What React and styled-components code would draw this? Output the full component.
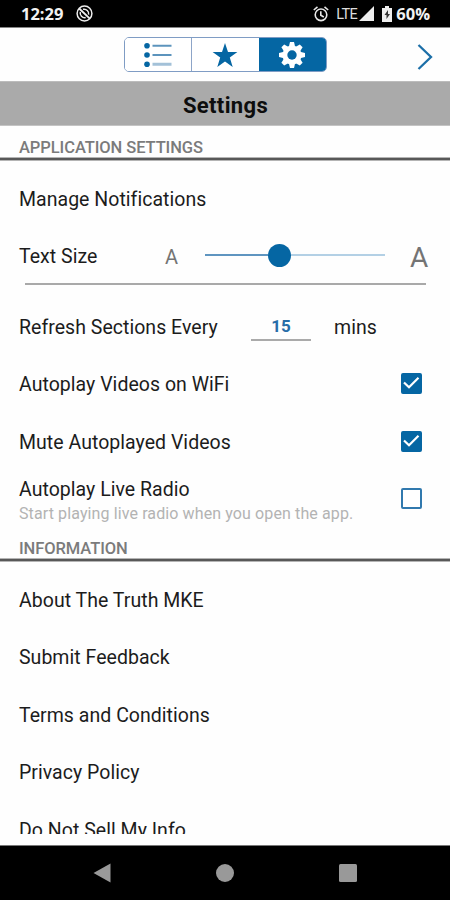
import React from "react";
import styled, { createGlobalStyle } from "styled-components";

const BLUE = "#0566a3";

const GlobalStyle = createGlobalStyle`
  * { box-sizing: border-box; }
  body { margin: 0; background: #fff; }
`;

const Screen = styled.div`
  width: 450px;
  height: 900px;
  display: flex;
  flex-direction: column;
  overflow: hidden;
  background: #fefefe;
  font-family: Roboto, sans-serif;
  color: #1c1c1c;
`;

const StatusBar = styled.header`
  height: 28px;
  flex: none;
  display: flex;
  align-items: center;
  justify-content: space-between;
  padding: 0 20px 0 21px;
  background: #000;
  border-bottom: 1px solid #858585;
  color: #f2f2f2;
`;

const StatusGroup = styled.div`
  display: flex;
  align-items: center;
  svg { display: block; }
`;

const StatusText = styled.span`
  font: 700 16.5px/20px "Open Sans", sans-serif;
  margin-right: ${(p) => p.$gap || "0"};
`;

const Network = styled.span`
  font-size: 14.5px;
  line-height: 20px;
  letter-spacing: -0.6px;
  margin: 2px 2px 0 7px;
  color: #ddd;
`;

const Battery = styled.span`
  display: flex;
  margin: 0 4px 0 8px;
`;

const Toolbar = styled.nav`
  height: 53px;
  flex: none;
  display: grid;
  grid-template-columns: 124px 203px 1fr;
  align-items: start;
  padding-top: 9px;
`;

const Segments = styled.div`
  grid-column: 2;
  height: 35px;
  display: grid;
  grid-template-columns: 67px 67px 1fr;
  border: 1px solid #7f9cc4;
  border-radius: 5px;
  overflow: hidden;
`;

const Segment = styled.button`
  display: flex;
  align-items: center;
  justify-content: center;
  padding: 0 ${(p) => (p.$divided ? "0" : "1px")} 0 0;
  border: 0;
  border-right: ${(p) => (p.$divided ? "1px solid #8da5c8" : "0")};
  background: ${(p) => (p.$active ? BLUE : "#fff")};
`;

const NextButton = styled.button`
  justify-self: end;
  display: flex;
  padding: 0;
  margin: 6px 17px 0 0;
  border: 0;
  background: none;
`;

const Title = styled.h1`
  height: 45px;
  flex: none;
  margin: 0;
  padding-left: 1px;
  background: #aaa;
  border-top: 1px solid #bcbcbc;
  border-bottom: 1px solid #c4c4c4;
  text-align: center;
  font-size: 22px;
  font-weight: 700;
  line-height: 48px;
  letter-spacing: 0.35px;
  color: #0d0d0d;
`;

const Content = styled.main`
  height: 708px;
  flex: none;
  overflow: hidden;
`;

const SectionLabel = styled.h2`
  height: 35px;
  margin: ${(p) => p.$margin};
  padding: 6px 0 0 19px;
  background: linear-gradient(#b4b4b4 1px, #585858 1px 3px, #b4b4b4 3px) bottom / 100% 4px no-repeat;
  font-size: 16.5px;
  font-weight: 500;
  line-height: 32px;
  letter-spacing: -0.08px;
  color: #7b7b7b;
`;

const Row = styled.div`
  height: 57.5px;
  display: flex;
  align-items: center;
  padding: 0 28px 0 19px;
`;

const Label = styled.span`
  flex: ${(p) => (p.$width ? "none" : "1")};
  width: ${(p) => p.$width || "auto"};
  font-size: 19.5px;
  line-height: 24px;
  letter-spacing: 0.03px;
  white-space: nowrap;
`;

const Stack = styled.div`
  flex: 1;
  display: flex;
  flex-direction: column;
  padding-top: 3px;
`;

const Hint = styled.span`
  font-size: 16px;
  line-height: 24px;
  letter-spacing: 0.11px;
  color: #b3b3b3;
  white-space: nowrap;
`;

const SizeMark = styled.span`
  flex: none;
  font-size: ${(p) => p.$size};
  color: #747474;
`;

const Slider = styled.div`
  flex: none;
  width: 180px;
  height: 24px;
  margin: -4px 25px 0 27px;
  display: grid;
  grid-template-columns: 62.5px 23px 1fr;
  align-items: center;
`;

const Track = styled.span`
  height: 2px;
  background: ${(p) => (p.$filled ? "#5f95c0" : "#b3d0e5")};
`;

const Thumb = styled.span`
  width: 23px;
  height: 23px;
  border-radius: 50%;
  background: ${BLUE};
`;

const Rule = styled.div`
  height: 2px;
  margin: -3px 24px 14px 25px;
  background: #a9a9a9;
`;

const Minutes = styled.span`
  width: 60px;
  height: 27px;
  margin-right: 23px;
  border-bottom: 2px solid #aaa;
  text-align: center;
  font-size: 17px;
  font-weight: 700;
  line-height: 25px;
  color: #286da8;
`;

const Checkbox = styled.span`
  width: 21px;
  height: 21px;
  margin-bottom: 3px;
  display: flex;
  align-items: center;
  justify-content: center;
  border: 2px solid ${(p) => (p.$checked ? BLUE : "#3179ae")};
  border-radius: 2px;
  background: ${(p) => (p.$checked ? BLUE : "#fff")};
  svg { flex: none; }
`;

const NavBar = styled.footer`
  height: 55px;
  flex: none;
  margin-top: auto;
  border-top: 1px solid #777;
  background: #000;
  display: flex;
  justify-content: center;
  align-items: center;
  gap: 105px;
`;

const Check = ({ on }) => (
  <Checkbox $checked={on}>
    {on && (
      <svg width="21" height="21" viewBox="0 0 21 21">
        <path d="M3 9.5 8 14.3 17.5 4.8" fill="none" stroke="#fff" strokeWidth="2.2" />
      </svg>
    )}
  </Checkbox>
);

const ListIcon = () => (
  <svg width="30" height="26" viewBox="0 0 30 26">
    {[3.8, 13, 22.2].map((y, i) => (
      <g key={y}>
        <circle cx="4" cy={y} r="2.8" fill={BLUE} />
        <path d={`M9.5 ${y}H28.5`} stroke={i === 2 ? "#a3c1d8" : "#5c94bd"} strokeWidth={i === 2 ? 3 : 2} />
      </g>
    ))}
  </svg>
);

const StarIcon = () => (
  <svg width="28" height="26" viewBox="0 0 28 26">
    <path d="M14 .9 17 10.1H26.4l-7.6 5.5 2.9 9.4L14 19.4l-7.7 5.6 2.9-9.4-7.6-5.5H11z" fill={BLUE} />
  </svg>
);

const GearIcon = () => (
  <svg width="28" height="28" viewBox="-14 -14 28 28">
    {[0, 45, 90, 135].map((a) => (
      <path key={a} d="M-3.2-8-2-13h4L3.2-8V8L2 13h-4L-3.2 8z" fill="#fff" transform={`rotate(${a})`} />
    ))}
    <circle r="9.5" fill="#fff" />
    <circle r="4.7" fill={BLUE} />
  </svg>
);

export default function App() {
  return (
    <Screen>
      <GlobalStyle />
      <StatusBar>
        <StatusGroup>
          <StatusText $gap="13px">12:29</StatusText>
          <svg width="17" height="17" viewBox="0 0 17 17" fill="none" stroke="#eee">
            <circle cx="8.5" cy="8.5" r="7.4" strokeWidth="1.5" />
            <path d="M3.2 3.5 13.8 13.6" strokeWidth="1.9" />
            <path d="M7 4.3a4.6 4.6 0 0 1 5.6 5.4M4.3 7a4.6 4.6 0 0 0 5.4 5.6" strokeWidth="1.5" />
          </svg>
        </StatusGroup>
        <StatusGroup>
          <svg width="16" height="16" viewBox="0 0 16 16" fill="none" stroke="#e8e8e8" strokeWidth="1.6">
            <circle cx="8" cy="8.8" r="5.8" />
            <path d="M.8 4 4.5.9M15.2 4 11.5.9M7.8 5.2v4l3 1.8" />
          </svg>
          <Network>LTE</Network>
          <svg width="15" height="15" viewBox="0 0 15 15"><path d="M15 0v15H0z" fill="#eee" /></svg>
          <Battery>
            <svg width="10" height="16" viewBox="0 0 10 16">
              <path d="M3 0h4v2h3v14H0V2h3z" fill="#eee" />
              <path d="M6 4 2.5 9h2v4L8 8H6z" fill="#333" />
            </svg>
          </Battery>
          <StatusText>60%</StatusText>
        </StatusGroup>
      </StatusBar>

      <Toolbar>
        <Segments>
          <Segment $divided aria-label="Sections"><ListIcon /></Segment>
          <Segment aria-label="Favorites"><StarIcon /></Segment>
          <Segment $active aria-label="Settings"><GearIcon /></Segment>
        </Segments>
        <NextButton aria-label="Next">
          <svg width="16" height="28" viewBox="0 0 16 28">
            <path d="M1.5 2 14 14 1.5 26" fill="none" stroke="#1c6fa8" strokeWidth="2.3" />
          </svg>
        </NextButton>
      </Toolbar>

      <Title>Settings</Title>

      <Content>
        <SectionLabel $margin="0 0 10px">APPLICATION SETTINGS</SectionLabel>
        <Row><Label>Manage Notifications</Label></Row>
        <Row>
          <Label $width="146px">Text Size</Label>
          <SizeMark $size="20px">A</SizeMark>
          <Slider>
            <Track $filled />
            <Thumb />
            <Track />
          </Slider>
          <SizeMark $size="28px">A</SizeMark>
        </Row>
        <Rule />
        <Row>
          <Label $width="232px">Refresh Sections Every</Label>
          <Minutes>15</Minutes>
          <Label>mins</Label>
        </Row>
        <Row><Label>Autoplay Videos on WiFi</Label><Check on /></Row>
        <Row><Label>Mute Autoplayed Videos</Label><Check on /></Row>
        <Row>
          <Stack>
            <Label>Autoplay Live Radio</Label>
            <Hint>Start playing live radio when you open the app.</Hint>
          </Stack>
          <Check />
        </Row>
        <SectionLabel $margin="-2px 0 10px">INFORMATION</SectionLabel>
        <Row><Label>About The Truth MKE</Label></Row>
        <Row><Label>Submit Feedback</Label></Row>
        <Row><Label>Terms and Conditions</Label></Row>
        <Row><Label>Privacy Policy</Label></Row>
        <Row><Label>Do Not Sell My Info</Label></Row>
      </Content>

      <NavBar>
        <svg width="18" height="20" viewBox="0 0 18 20"><path d="M17.5.5v19L.5 10z" fill="#999" /></svg>
        <svg width="18" height="18" viewBox="0 0 18 18"><circle cx="9" cy="9" r="9" fill="#999" /></svg>
        <svg width="18" height="18" viewBox="0 0 18 18"><rect width="18" height="18" rx="1.5" fill="#999" /></svg>
      </NavBar>
    </Screen>
  );
}
